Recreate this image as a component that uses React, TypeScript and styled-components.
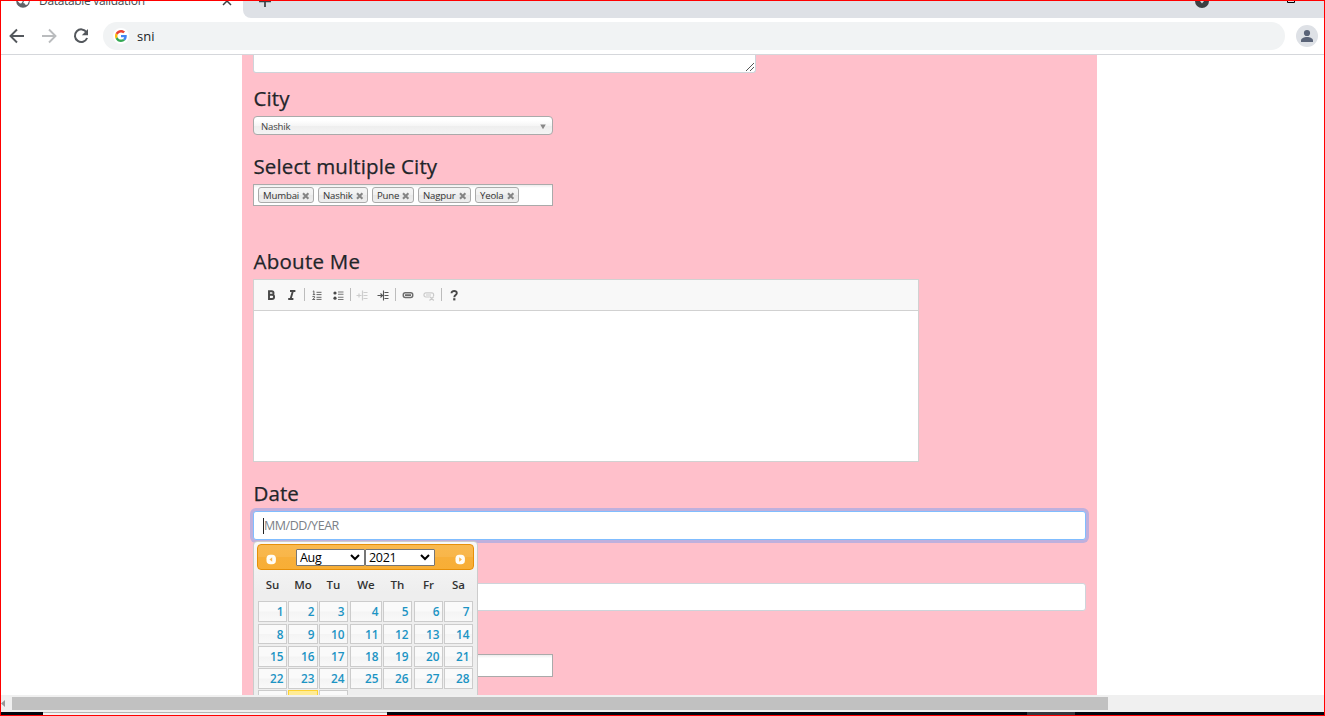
import React from 'react';
import styled, { createGlobalStyle, css } from 'styled-components';

const Global = createGlobalStyle`
  * { box-sizing: border-box; }
  body { margin: 0; background: #fff; overflow: hidden; }
`;

const ui = '"Segoe UI", "Open Sans", "Noto Sans", sans-serif';

const Window = styled.div`
  width: 1325px;
  height: 716px;
  border: 1px solid #f00;
  overflow: hidden;
  display: flex;
  flex-direction: column;
  background: #fff;
  font-family: ${ui};
  color: #212529;
`;

const TabStrip = styled.div`
  height: 17px;
  flex: none;
  display: flex;
  overflow: hidden;
  background: #fff;
`;

const Tab = styled.div`
  width: 242px;
  height: 17px;
  display: flex;
  align-items: flex-start;
  padding-left: 14px;
  & > svg { flex: none; display: block; }
`;

const TabTitle = styled.span`
  margin: -9px 0 0 8px;
  width: 183px;
  font-size: 12px;
  line-height: 18px;
  letter-spacing: -0.32px;
  color: #45494d;
  white-space: nowrap;
`;

const StripRest = styled.div`
  flex: 1;
  display: flex;
  background: #dee1e6;
  border-bottom-left-radius: 8px;
  padding-left: 15px;
  & > svg { flex: none; display: block; }
`;

const Spacer = styled.div<{ $w: number }>`
  flex: none;
  width: ${(p) => p.$w}px;
`;

const Toolbar = styled.div`
  height: 37px;
  flex: none;
  display: flex;
  align-items: center;
  border-bottom: 1px solid #d5d7db;
  padding-left: 6px;
`;

const NavIcon = styled.svg`
  width: 20px;
  height: 20px;
  margin-right: 12px;
  flex: none;
`;

const Omnibox = styled.div`
  width: 1182px;
  height: 28px;
  border-radius: 14px;
  background: #f1f3f4;
  display: flex;
  align-items: center;
  padding-left: 10px;
  font-size: 13px;
  line-height: 18px;
  color: #202124;
`;

const Logo = styled.span`
  width: 16px;
  height: 16px;
  border-radius: 50%;
  background: #fff;
  display: flex;
  align-items: center;
  justify-content: center;
  margin-right: 8px;
`;

const Avatar = styled.span`
  width: 22px;
  height: 22px;
  border-radius: 50%;
  background: #dee1e6;
  margin-left: 11px;
  & > svg { display: block; }
`;

const Page = styled.main`
  height: 640px;
  flex: none;
  overflow: hidden;
  padding-left: 241px;
`;

const Form = styled.form`
  width: 855px;
  height: 640px;
  padding: 0 11px;
  background: #ffc0cb;
  overflow: hidden;
`;

const TextArea = styled.div`
  width: 503px;
  height: 18px;
  background: #fff;
  border: 1px solid #ced4da;
  border-top: 0;
  border-radius: 0 0 3px 3px;
  display: flex;
  justify-content: flex-end;
  align-items: flex-end;
`;

const Heading = styled.h4<{ $top: number; $track?: number }>`
  margin: ${(p) => p.$top}px 0 0;
  height: 26px;
  font-size: 20.5px;
  line-height: 26px;
  font-weight: 500;
  -webkit-text-stroke: 0.25px #212529;
  letter-spacing: ${(p) => p.$track ?? 0.1}px;
  padding-left: 0.5px;
  white-space: nowrap;
`;

const ChosenSingle = styled.div`
  margin-top: 5px;
  width: 300px;
  height: 19px;
  border: 1px solid #aaa;
  border-radius: 4px;
  background: linear-gradient(#fff 20%, #f6f6f6 50%, #eee 52%, #f4f4f4 100%);
  display: flex;
  align-items: center;
  justify-content: space-between;
  padding: 2px 6px 0 7px;
  font-size: 9.6px;
  line-height: 14px;
  letter-spacing: -0.2px;
  color: #444;
`;

const ChosenMulti = styled.div`
  margin-top: 5px;
  width: 300px;
  height: 22px;
  border: 1px solid #aaa;
  background: linear-gradient(#eee 1%, #fff 15%);
  display: flex;
  gap: 4px;
  padding: 2px 4px;
`;

const Choice = styled.span<{ $w: number }>`
  width: ${(p) => p.$w}px;
  height: 16px;
  border: 1px solid #aaa;
  border-radius: 3px;
  background: linear-gradient(#f4f4f4 20%, #f0f0f0 50%, #e8e8e8 52%, #eee 100%);
  display: flex;
  align-items: center;
  justify-content: space-between;
  padding: 1px 3px 0 4px;
  font-size: 9.6px;
  line-height: 13px;
  letter-spacing: -0.15px;
  color: #333;
  white-space: nowrap;
  & > svg { flex: none; }
`;

const Editor = styled.div`
  margin-top: 5px;
  width: 666px;
  height: 183px;
  border: 1px solid #d1d1d1;
  background: #fff;
`;

const EditorBar = styled.div`
  height: 31px;
  background: #f8f8f8;
  border-bottom: 1px solid #d1d1d1;
  & > svg { display: block; }
`;

const DateField = styled.div`
  position: relative;
  margin: 5px 0 43px;
`;

const Input = styled.div<{ $focus?: boolean }>`
  height: ${(p) => (p.$focus ? 29 : 28)}px;
  background: #fff;
  border: 1px solid #ced4da;
  border-radius: 3px;
  display: flex;
  align-items: center;
  padding: 1px 9px 0;
  font-size: 12.5px;
  line-height: 18px;
  letter-spacing: -0.45px;
  color: #7b8187;
  ${(p) => p.$focus && css`
    border-color: #80bdff;
    box-shadow: 0 0 0 3px rgba(128, 160, 240, 0.5);
  `}
`;

const Caret = styled.span`
  width: 1px;
  height: 16px;
  background: #222;
`;

const PlainInput = styled.div`
  width: 300px;
  height: 23px;
  margin-top: 43px;
  border: 1px solid #aaa;
  background: linear-gradient(#eee 1%, #fff 15%);
`;

const Picker = styled.div`
  position: absolute;
  left: 0;
  top: 30px;
  width: 225px;
  height: 200px;
  border: 1px solid #ccc;
  border-radius: 4px;
  background: linear-gradient(#f8f8f8 0, #eee 50px);
  padding: 2px 3px;
  font-family: "Trebuchet MS", "Open Sans", sans-serif;
`;

const PickerHead = styled.div`
  width: 217px;
  height: 26px;
  border: 1px solid #e78f08;
  border-radius: 4px;
  background: linear-gradient(#f9b94f 0, #f8b64a 48%, #f7af3a 52%, #f8ae35 100%);
  display: flex;
  align-items: center;
  padding-left: 8px;
  & > svg { flex: none; margin-top: 4px; }
`;

const MiniSelect = styled.span<{ $w: number }>`
  width: ${(p) => p.$w}px;
  height: 17px;
  border: 1px solid #767676;
  border-radius: 1px;
  background: #fff;
  display: flex;
  align-items: center;
  justify-content: space-between;
  padding: 0 4px 0 3px;
  font-size: 12.5px;
  line-height: 15px;
  letter-spacing: -0.3px;
  color: #000;
`;

const Grid = styled.div`
  display: grid;
  grid-template-columns: 30px 31px 31px 33px 31px 30px 29px;
  grid-template-rows: 31px 23px 22px 22px 22px 22px;
  margin-left: 1px;
`;

const Weekday = styled.span<{ $w: number }>`
  width: ${(p) => p.$w}px;
  text-align: center;
  font-size: 11.5px;
  line-height: 29px;
  font-weight: 600;
  color: #333;
`;

const Day = styled.span<{ $w: number; $h: number; $today?: boolean }>`
  width: ${(p) => p.$w}px;
  height: ${(p) => p.$h}px;
  border: 1px solid ${(p) => (p.$today ? '#fed22f' : '#ccc')};
  background: ${(p) => (p.$today ? '#ffeb94' : 'linear-gradient(#fafafa 48%, #f4f4f4 52%, #f9f9f9)')};
  color: #1c94c4;
  font-size: 11.8px;
  font-weight: 600;
  line-height: 19px;
  text-align: right;
  padding-right: 2.5px;
`;

const Scroll = styled.div`
  height: 17px;
  flex: none;
  background: #f0f0f0;
  display: flex;
  align-items: center;
  & > svg { flex: none; }
`;

const Thumb = styled.span`
  width: 1096px;
  height: 13px;
  background: #c1c1c1;
`;

const Taskbar = styled.div`
  flex: 1;
  display: flex;
  background: #04060f;
`;

const TaskItem = styled.span<{ $x: number; $w: number; $light?: boolean }>`
  margin-left: ${(p) => p.$x}px;
  width: ${(p) => p.$w}px;
  background: ${(p) => (p.$light ? '#f2f2f2' : '#35383f')};
  border-top: ${(p) => (p.$light ? '1px solid #b5b5b5' : '0')};
`;

const Cross = () => (
  <svg width="8" height="8" viewBox="0 0 8 8">
    <path d="M1 1.300l5.400 5.400M6.400 1.300L1 6.700" stroke="#858585" strokeWidth="2.100" />
  </svg>
);

const Chevron = () => (
  <svg width="10" height="8" viewBox="0 0 10 8" fill="none">
    <path d="M1 2l4 4 4-4" stroke="#000" strokeWidth="2" />
  </svg>
);

const RoundArrow = ({ next }: { next?: boolean }) => (
  <svg width="11" height="11" viewBox="0 0 11 11">
    <rect x=".5" y=".8" width="9.400" height="9.400" rx="3.800" fill="#fffdf6" />
    <path d={next ? 'M4.200 3.200v4.600L6.900 5.500z' : 'M6.200 3.200v4.600L3.500 5.500z'} fill="#f5b653" />
  </svg>
);

const EditorIcons = () => (
  <svg width="230" height="30" viewBox="254 280 230 30" fill="none">
    <g stroke="#bcbcbc">
      <path d="M304.5 288v13M350.5 288v13M395.5 288v13M441.5 288v13" />
    </g>
    <path d="M269 291.2h2.7a1.75 1.75 0 010 3.6H269zm0 3.6h3a2.1 2.1 0 010 4.2h-3z" stroke="#484848" strokeWidth="1.9" />
    <path d="M290 291h5.4M288.2 299h5.2M292.9 291l-2.3 8" stroke="#484848" strokeWidth="1.9" />
    <g stroke="#666">
      <path d="M316.5 292.3h5M316.5 294.6h5M316.5 297.300h5M316.5 299.400h5" strokeWidth="1" />
      <path d="M312.800 291.5l1.100-.6v3.800M312.800 294.600h2.400M312.400 296.600h2.200v1.200l-2.100 1.700h2.600" strokeWidth="1" />
    </g>
    <g stroke="#777" strokeWidth="1.100">
      <path d="M338 292h5.500M338 294.300h5.500M338 297.300h5.500M338 299.500h5.500" />
    </g>
    <circle cx="335" cy="293" r="1.600" fill="#484848" />
    <circle cx="335" cy="298.200" r="1.600" fill="#484848" />
    <g stroke="#cdcdcd">
      <path d="M356.500 295.500h5M359 293.500v4M362.500 290.500v10M363.500 292.500h4M363.500 295.500h4M363.500 298.500h4" strokeWidth="1.200" />
    </g>
    <g stroke="#555">
      <path d="M377.500 295.500h5.500M380.500 293.500l2 2-2 2M383.500 290.500v10M384.500 292.500h4M384.500 295.500h4M384.500 298.500h4" strokeWidth="1.100" />
    </g>
    <rect x="403.3" y="292.8" width="9.4" height="4.6" rx="2" stroke="#6c6c6c" strokeWidth="1.5" />
    <path d="M405 295.1h6" stroke="#484848" strokeWidth="1.400" />
    <g stroke="#cacaca" strokeWidth="1.200">
      <path d="M429 297h-3.200a1.800 1.800 0 01-1.800-2v-.3a1.800 1.800 0 011.800-1.900h6a1.800 1.800 0 011.800 2v1.200M426 295h5M429.500 296.500l4.300 4M433.800 296.500l-4.300 4" />
    </g>
    <path d="M451.500 293.300c0-3.200 5.500-3 5.300 0-.1 1.800-2.400 1.800-2.500 3.900" stroke="#484848" strokeWidth="1.900" />
    <rect x="453.2" y="298.200" width="2.200" height="2.200" fill="#484848" />
  </svg>
);

const widths = [29, 30, 29, 32, 29, 29, 29];
const heights = [21, 20, 21, 21, 21];
const weekdays = ['Su', 'Mo', 'Tu', 'We', 'Th', 'Fr', 'Sa'];
const days = Array.from({ length: 31 }, (_, i) => i + 1);
const cities: [string, number][] = [['Mumbai', 56], ['Nashik', 50], ['Pune', 42], ['Nagpur', 53], ['Yeola', 44]];

const Datepicker = () => (
  <Picker>
    <PickerHead>
      <RoundArrow />
      <Spacer $w={19} />
      <MiniSelect $w={69}>Aug<Chevron /></MiniSelect>
      <MiniSelect $w={70}>2021<Chevron /></MiniSelect>
      <Spacer $w={20} />
      <RoundArrow next />
    </PickerHead>
    <Grid>
      {weekdays.map((d, i) => <Weekday key={d} $w={widths[i]}>{d}</Weekday>)}
      {days.map((d, i) => (
        <Day key={d} $w={widths[i % 7]} $h={heights[Math.floor(i / 7)]} $today={d === 30}>
          {d < 29 ? d : null}
        </Day>
      ))}
    </Grid>
  </Picker>
);

export default function App() {
  return (
    <Window>
      <Global />
      <TabStrip>
        <Tab>
          <svg width="16" height="8" viewBox="0 0 16 8">
            <path d="M1.200 0a6.800 6.800 0 0013.600 0z" fill="#5f6368" />
            <path d="M2.600 0h5.200L6.500 2.200 5 2.500 4 1.500zM9 0h5l-1.500 3.500-1.800.5-1-1.500-1.500-.5z" fill="#fff" />
          </svg>
          <TabTitle>Datatable validation</TabTitle>
          <svg width="10" height="8" viewBox="0 0 10 8">
            <path d="M1 4L5 0l4 4" fill="none" stroke="#3c4043" strokeWidth="1.500" />
          </svg>
        </Tab>
        <StripRest>
          <svg width="14" height="8" viewBox="0 0 14 8">
            <path d="M1 0.500h12M7 0v6" fill="none" stroke="#3c4043" strokeWidth="1.700" />
          </svg>
          <Spacer $w={922} />
          <svg width="16" height="8" viewBox="0 0 16 8">
            <path d="M1 0a7 7 0 0014 0z" fill="#3c4043" />
            <path d="M6 0h4L8 2.500z" fill="#dee1e6" />
          </svg>
          <Spacer $w={77} />
          <svg width="9" height="3" viewBox="0 0 9 3">
            <path d="M.5 0v1.500h7V0" fill="none" stroke="#000" />
          </svg>
        </StripRest>
      </TabStrip>
      <Toolbar>
        <NavIcon viewBox="0 0 20 20" fill="none" stroke="#54585d" strokeWidth="1.900">
          <path d="M17 10H4M10 3.500L3.500 10l6.500 6.500" />
        </NavIcon>
        <NavIcon viewBox="0 0 20 20" fill="none" stroke="#babcbe" strokeWidth="1.900">
          <path d="M3 10h13M10 3.500l6.500 6.500-6.500 6.500" />
        </NavIcon>
        <NavIcon viewBox="0 0 20 20" fill="none" stroke="#54585d" strokeWidth="2">
          <path d="M15.500 6.200A6.300 6.300 0 1016.100 12" />
          <path d="M17 3v6.200h-6.200z" fill="#54585d" stroke="none" />
        </NavIcon>
        <Omnibox>
          <Logo>
            <svg width="12" height="12" viewBox="0 0 48 48">
              <path fill="#EA4335" d="M24 9.500c3.540 0 6.710 1.220 9.210 3.600l6.850-6.850C35.900 2.380 30.470 0 24 0 14.620 0 6.510 5.380 2.560 13.220l7.980 6.190C12.430 13.720 17.740 9.500 24 9.500z" />
              <path fill="#4285F4" d="M46.980 24.550c0-1.570-.15-3.090-.38-4.550H24v9.020h12.940c-.58 2.960-2.260 5.480-4.780 7.180l7.730 6c4.510-4.180 7.090-10.360 7.090-17.650z" />
              <path fill="#FBBC05" d="M10.530 28.590A14.500 14.500 0 019.770 24c0-1.600.28-3.140.76-4.590l-7.980-6.190A23.900 23.900 0 000 24c0 3.880.92 7.540 2.560 10.780l7.970-6.190z" />
              <path fill="#34A853" d="M24 48c6.480 0 11.930-2.130 15.890-5.810l-7.730-6c-2.150 1.450-4.920 2.300-8.160 2.300-6.260 0-11.570-4.220-13.470-9.910l-7.980 6.190C6.510 42.620 14.620 48 24 48z" />
            </svg>
          </Logo>
          sni
        </Omnibox>
        <Avatar>
          <svg width="22" height="22" viewBox="0 0 22 22" fill="#5a6478">
            <circle cx="11" cy="8" r="3.100" />
            <path d="M5 17v-1.500c0-2.200 3-3.500 6-3.500s6 1.300 6 3.500V17z" />
          </svg>
        </Avatar>
      </Toolbar>
      <Page>
        <Form>
          <TextArea>
            <svg width="10" height="10" viewBox="0 0 10 10">
              <path d="M1 9l8-8M5 9l4-4" stroke="#555" fill="none" />
            </svg>
          </TextArea>
          <Heading $top={12}>City</Heading>
          <ChosenSingle>
            Nashik
            <svg width="6" height="6" viewBox="0 0 6 6"><path d="M.2 .5h5.600L3 5.300z" fill="#888" /></svg>
          </ChosenSingle>
          <Heading $top={18} $track={0.12}>Select multiple City</Heading>
          <ChosenMulti>
            {cities.map(([name, w]) => <Choice key={name} $w={w}>{name}<Cross /></Choice>)}
          </ChosenMulti>
          <Heading $top={42} $track={0.25}>Aboute Me</Heading>
          <Editor><EditorBar><EditorIcons /></EditorBar></Editor>
          <Heading $top={18}>Date</Heading>
          <DateField>
            <Input $focus><Caret />MM/DD/YEAR</Input>
            <Datepicker />
          </DateField>
          <Input />
          <PlainInput />
        </Form>
      </Page>
      <Scroll>
        <svg width="11" height="9" viewBox="0 0 11 9"><path d="M4 1v7L0 4.500z" fill="#999" /></svg>
        <Thumb />
      </Scroll>
      <Taskbar>
        <TaskItem $x={42} $w={344} $light />
        <TaskItem $x={640} $w={48} />
      </Taskbar>
    </Window>
  );
}
